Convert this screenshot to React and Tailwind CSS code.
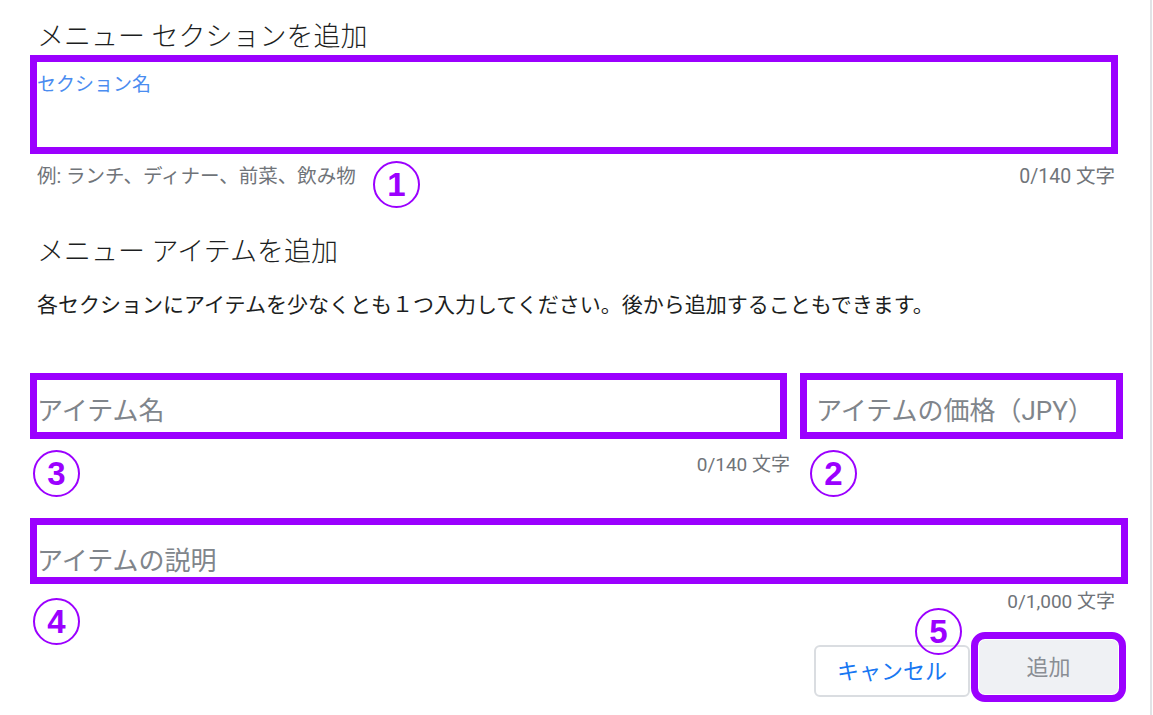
import React from "react";

const P = "border-[#9b00ff]";

function Num({ n, className }) {
  return (
    <div
      className={
        "absolute w-[47px] h-[47px] rounded-full border-2 border-[#9b00ff] flex items-center justify-center text-[#9b00ff] text-[33px] font-bold leading-none " +
        className
      }
      style={{ fontFamily: '"Liberation Sans", Arial, sans-serif' }}
    >
      {n}
    </div>
  );
}

export default function App() {
  return (
    <div
      className="relative w-[1153px] h-[715px] overflow-hidden bg-white"
      style={{ fontFamily: 'Roboto, "Noto Sans CJK JP", sans-serif' }}
    >
      <div className="w-[1152px] h-full border-r-2 border-[#e1e3e6] pl-[30px] pt-[20px]">
        <h2 className="pl-[7px] text-[27px] leading-[34px] text-[#1c1e21] font-light">
          メニュー セクションを追加
        </h2>
        <div className={"mt-[1px] w-[1088px] h-[99px] border-[7px] " + P + " pt-[11px]"}>
          <span className="text-[19px] leading-[24px] text-[#4a8cf0]">セクション名</span>
        </div>
        <div className="mt-[11px] w-[1088px] flex justify-between pl-[7px] pr-[3px] text-[19.5px] leading-[24px] text-[#707479]">
          <span>例: ランチ、ディナー、前菜、飲み物</span>
          <span>0/140 文字</span>
        </div>

        <h2 className="mt-[46px] pl-[7px] text-[27px] leading-[34px] text-[#1c1e21] font-light">
          メニュー アイテムを追加
        </h2>
        <p className="mt-[22px] pl-[7px] text-[21px] leading-[28px] text-[#1c1e21]">
          各セクションにアイテムを少なくとも１つ入力してください。後から追加することもできます。
        </p>

        <div className="mt-[54px] flex gap-[13px]">
          <div className="w-[757px]">
            <div className={"h-[66px] border-[7px] " + P + " flex items-center"}>
              <span className="text-[26px] leading-[30px] text-[#80858b] pt-[9px]">アイテム名</span>
            </div>
            <div className="mt-[14px] text-right text-[19px] leading-[24px] text-[#707479] -mr-[3px]">
              0/140 文字
            </div>
          </div>
          <div className={"w-[323px] h-[66px] border-[7px] " + P + " flex items-center pl-[9px]"}>
            <span className="text-[26px] leading-[30px] text-[#80858b] pt-[9px]">アイテムの価格（JPY）</span>
          </div>
        </div>

        <div className={"mt-[41px] w-[1098px] h-[66px] border-[7px] " + P + " flex items-center"}>
          <span className="text-[26px] leading-[30px] text-[#80858b] pt-[20px]">アイテムの説明</span>
        </div>
        <div className="mt-[6px] w-[1085px] text-right text-[19px] leading-[24px] text-[#707479]">
          0/1,000 文字
        </div>

        <div className="mt-[18px] w-[1096px] flex justify-end items-center">
          <button className="w-[156px] h-[52px] mt-[8px] rounded-md border-2 border-[#dadde1] bg-white text-[22px] text-[#1877f2]">
            キャンセル
          </button>
          <div className={"ml-[1px] w-[155px] h-[70px] rounded-[14px] border-[7px] " + P + " p-[1px] bg-white"}>
            <div className="w-full h-full rounded-md bg-[#eff1f4] flex items-center justify-center text-[22px] text-[#8a8e94]">
              追加
            </div>
          </div>
        </div>
      </div>

      <Num n="1" className="left-[373px] top-[161px]" />
      <Num n="3" className="left-[33px] top-[450px]" />
      <Num n="2" className="left-[810px] top-[450px]" />
      <Num n="4" className="left-[33px] top-[598px]" />
      <Num n="5" className="left-[915px] top-[608px]" />
    </div>
  );
}
